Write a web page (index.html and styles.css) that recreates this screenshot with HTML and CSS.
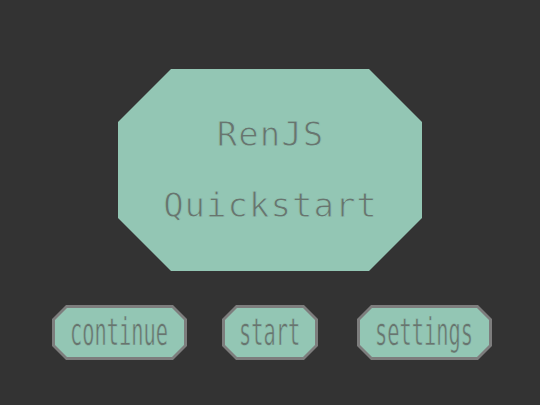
FILE: index.html
```html
<!DOCTYPE html>
<html>
<head>
<meta charset="utf-8">
<link rel="stylesheet" href="styles.css">
</head>
<body>
<div class="stage">
  <div class="title">
    <div class="title-line">RenJS</div>
    <div class="title-line">Quickstart</div>
  </div>
  <div class="menu">
    <div class="btn btn-wide"><div class="btn-inner"><span class="btn-label">continue</span></div></div>
    <div class="btn btn-narrow"><div class="btn-inner"><span class="btn-label">start</span></div></div>
    <div class="btn btn-wide btn-last"><div class="btn-inner"><span class="btn-label">settings</span></div></div>
  </div>
</div>
</body>
</html>
```
FILE: styles.css
```css
html, body {
  margin: 0;
  padding: 0;
  background: #333333;
}
.stage {
  width: 540px;
  height: 405px;
  display: flex;
  flex-direction: column;
  align-items: center;
  padding-top: 69px;
  box-sizing: border-box;
}
.title {
  width: 304px;
  height: 202px;
  background: #93c6b4;
  clip-path: polygon(53px 0, 251px 0, 304px 53px, 304px 149px, 251px 202px, 53px 202px, 0 149px, 0 53px);
  display: flex;
  flex-direction: column;
  align-items: center;
  justify-content: center;
  font-family: "DejaVu Sans Mono", monospace;
  font-size: 34px;
  letter-spacing: 1px;
  color: #68756f;
  -webkit-text-stroke: 0.9px #93c6b4;
}
.title-line {
  line-height: 71px;
  height: 71px;
  padding-left: 1px;
}
.menu {
  margin-top: 34px;
  display: flex;
  gap: 35px;
  width: 540px;
  padding-left: 52px;
  box-sizing: border-box;
}
.btn {
  height: 55px;
  background: #7d7d7d;
  padding: 3px;
  box-sizing: border-box;
  clip-path: polygon(14px 0, calc(100% - 14px) 0, 100% 14px, 100% calc(100% - 14px), calc(100% - 14px) 100%, 14px 100%, 0 calc(100% - 14px), 0 14px);
}
.btn-wide { width: 135px; }
.btn-narrow { width: 96px; }
.btn-last { margin-left: 4px; }
.btn-inner {
  width: 100%;
  height: 100%;
  background: #93c6b4;
  clip-path: polygon(12px 0, calc(100% - 12px) 0, 100% 12px, 100% calc(100% - 12px), calc(100% - 12px) 100%, 12px 100%, 0 calc(100% - 12px), 0 12px);
  display: flex;
  align-items: center;
  justify-content: center;
}
.btn-label {
  display: inline-block;
  font-family: "DejaVu Sans Mono", monospace;
  font-size: 37px;
  line-height: 49px;
  color: #68756f;
  transform: scaleX(0.55);
  -webkit-text-stroke: 0.6px #93c6b4;
  white-space: nowrap;
}
```
